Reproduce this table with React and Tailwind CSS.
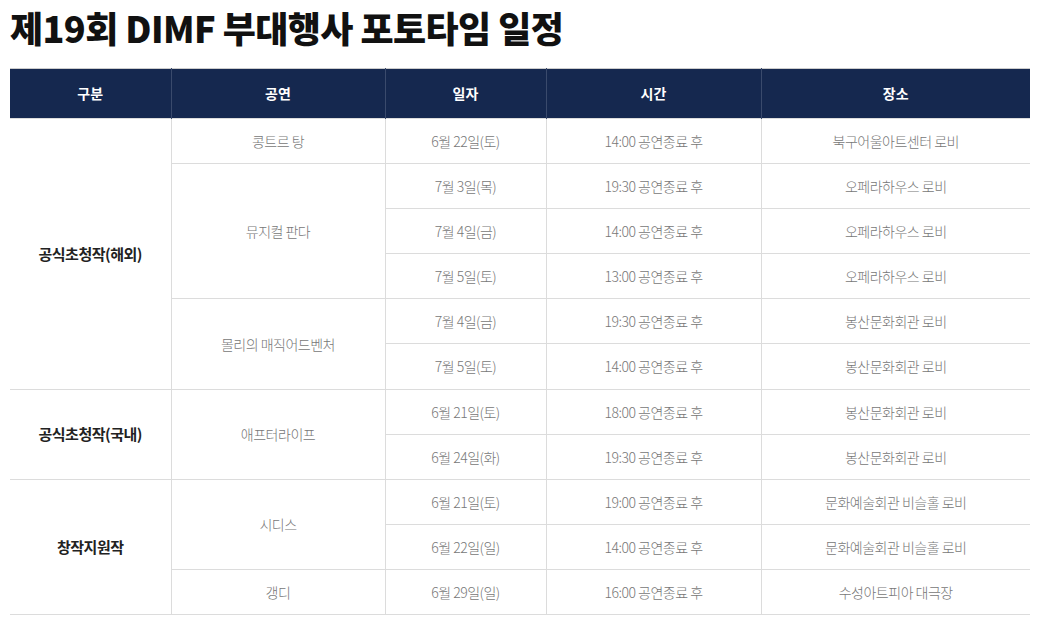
import React from 'react';

const groups = [
  {
    category: '공식초청작(해외)',
    shows: [
      { title: '콩트르 탕', slots: [['6월 22일(토)', '14:00 공연종료 후', '북구어울아트센터 로비']] },
      {
        title: '뮤지컬 판다',
        slots: [
          ['7월 3일(목)', '19:30 공연종료 후', '오페라하우스 로비'],
          ['7월 4일(금)', '14:00 공연종료 후', '오페라하우스 로비'],
          ['7월 5일(토)', '13:00 공연종료 후', '오페라하우스 로비'],
        ],
      },
      {
        title: '몰리의 매직어드벤처',
        slots: [
          ['7월 4일(금)', '19:30 공연종료 후', '봉산문화회관 로비'],
          ['7월 5일(토)', '14:00 공연종료 후', '봉산문화회관 로비'],
        ],
      },
    ],
  },
  {
    category: '공식초청작(국내)',
    shows: [
      {
        title: '애프터라이프',
        slots: [
          ['6월 21일(토)', '18:00 공연종료 후', '봉산문화회관 로비'],
          ['6월 24일(화)', '19:30 공연종료 후', '봉산문화회관 로비'],
        ],
      },
    ],
  },
  {
    category: '창작지원작',
    shows: [
      {
        title: '시디스',
        slots: [
          ['6월 21일(토)', '19:00 공연종료 후', '문화예술회관 비슬홀 로비'],
          ['6월 22일(일)', '14:00 공연종료 후', '문화예술회관 비슬홀 로비'],
        ],
      },
      { title: '갱디', slots: [['6월 29일(일)', '16:00 공연종료 후', '수성아트피아 대극장']] },
    ],
  },
];

const cell = 'border border-[#dcdcdc] text-center align-middle text-[14px] text-[#777] font-light tracking-[-0.5px]';

export default function App() {
  let row = 0;
  return (
    <div className="bg-white px-[10px] pt-[3px] font-['Noto_Sans_CJK_KR','Noto_Sans',sans-serif]">
      <h1 className="text-[36px] leading-[48px] font-black text-[#111] tracking-[-0.6px]">
        제19회 DIMF 부대행사 포토타임 일정
      </h1>
      <table className="mt-[17px] w-[1020px] table-fixed border-collapse border-t border-[#ccc]">
        <colgroup>
          <col className="w-[161px]" />
          <col className="w-[214px]" />
          <col className="w-[161px]" />
          <col className="w-[215px]" />
          <col />
        </colgroup>
        <thead>
          <tr className="h-[50px] bg-[#15284f] text-white text-[14px] font-bold">
            {['구분', '공연', '일자', '시간', '장소'].map((h, i) => (
              <th key={h} className={`border-[#3a4a6c] ${i > 0 ? 'border-l' : ''}`}>{h}</th>
            ))}
          </tr>
        </thead>
        <tbody>
          {groups.map(group => {
            const total = group.shows.reduce((n, s) => n + s.slots.length, 0);
            return group.shows.map((show, si) =>
              show.slots.map((slot, k) => {
                row += 1;
                // the reference has one row a pixel taller
                const tall = row === 6;
                return (
                  <tr key={group.category + show.title + k} className={tall ? 'h-[46px]' : 'h-[45px]'}>
                    {si === 0 && k === 0 && (
                      <td rowSpan={total} className="border-y border-[#dcdcdc] text-center align-middle text-[15px] font-bold text-[#222] tracking-[-0.5px]">
                        {group.category}
                      </td>
                    )}
                    {k === 0 && (
                      <td rowSpan={show.slots.length} className={cell}>{show.title}</td>
                    )}
                    <td className={cell}>{slot[0]}</td>
                    <td className={cell}>{slot[1]}</td>
                    <td className={`${cell} border-r-0`}>{slot[2]}</td>
                  </tr>
                );
              })
            );
          })}
        </tbody>
      </table>
    </div>
  );
}
